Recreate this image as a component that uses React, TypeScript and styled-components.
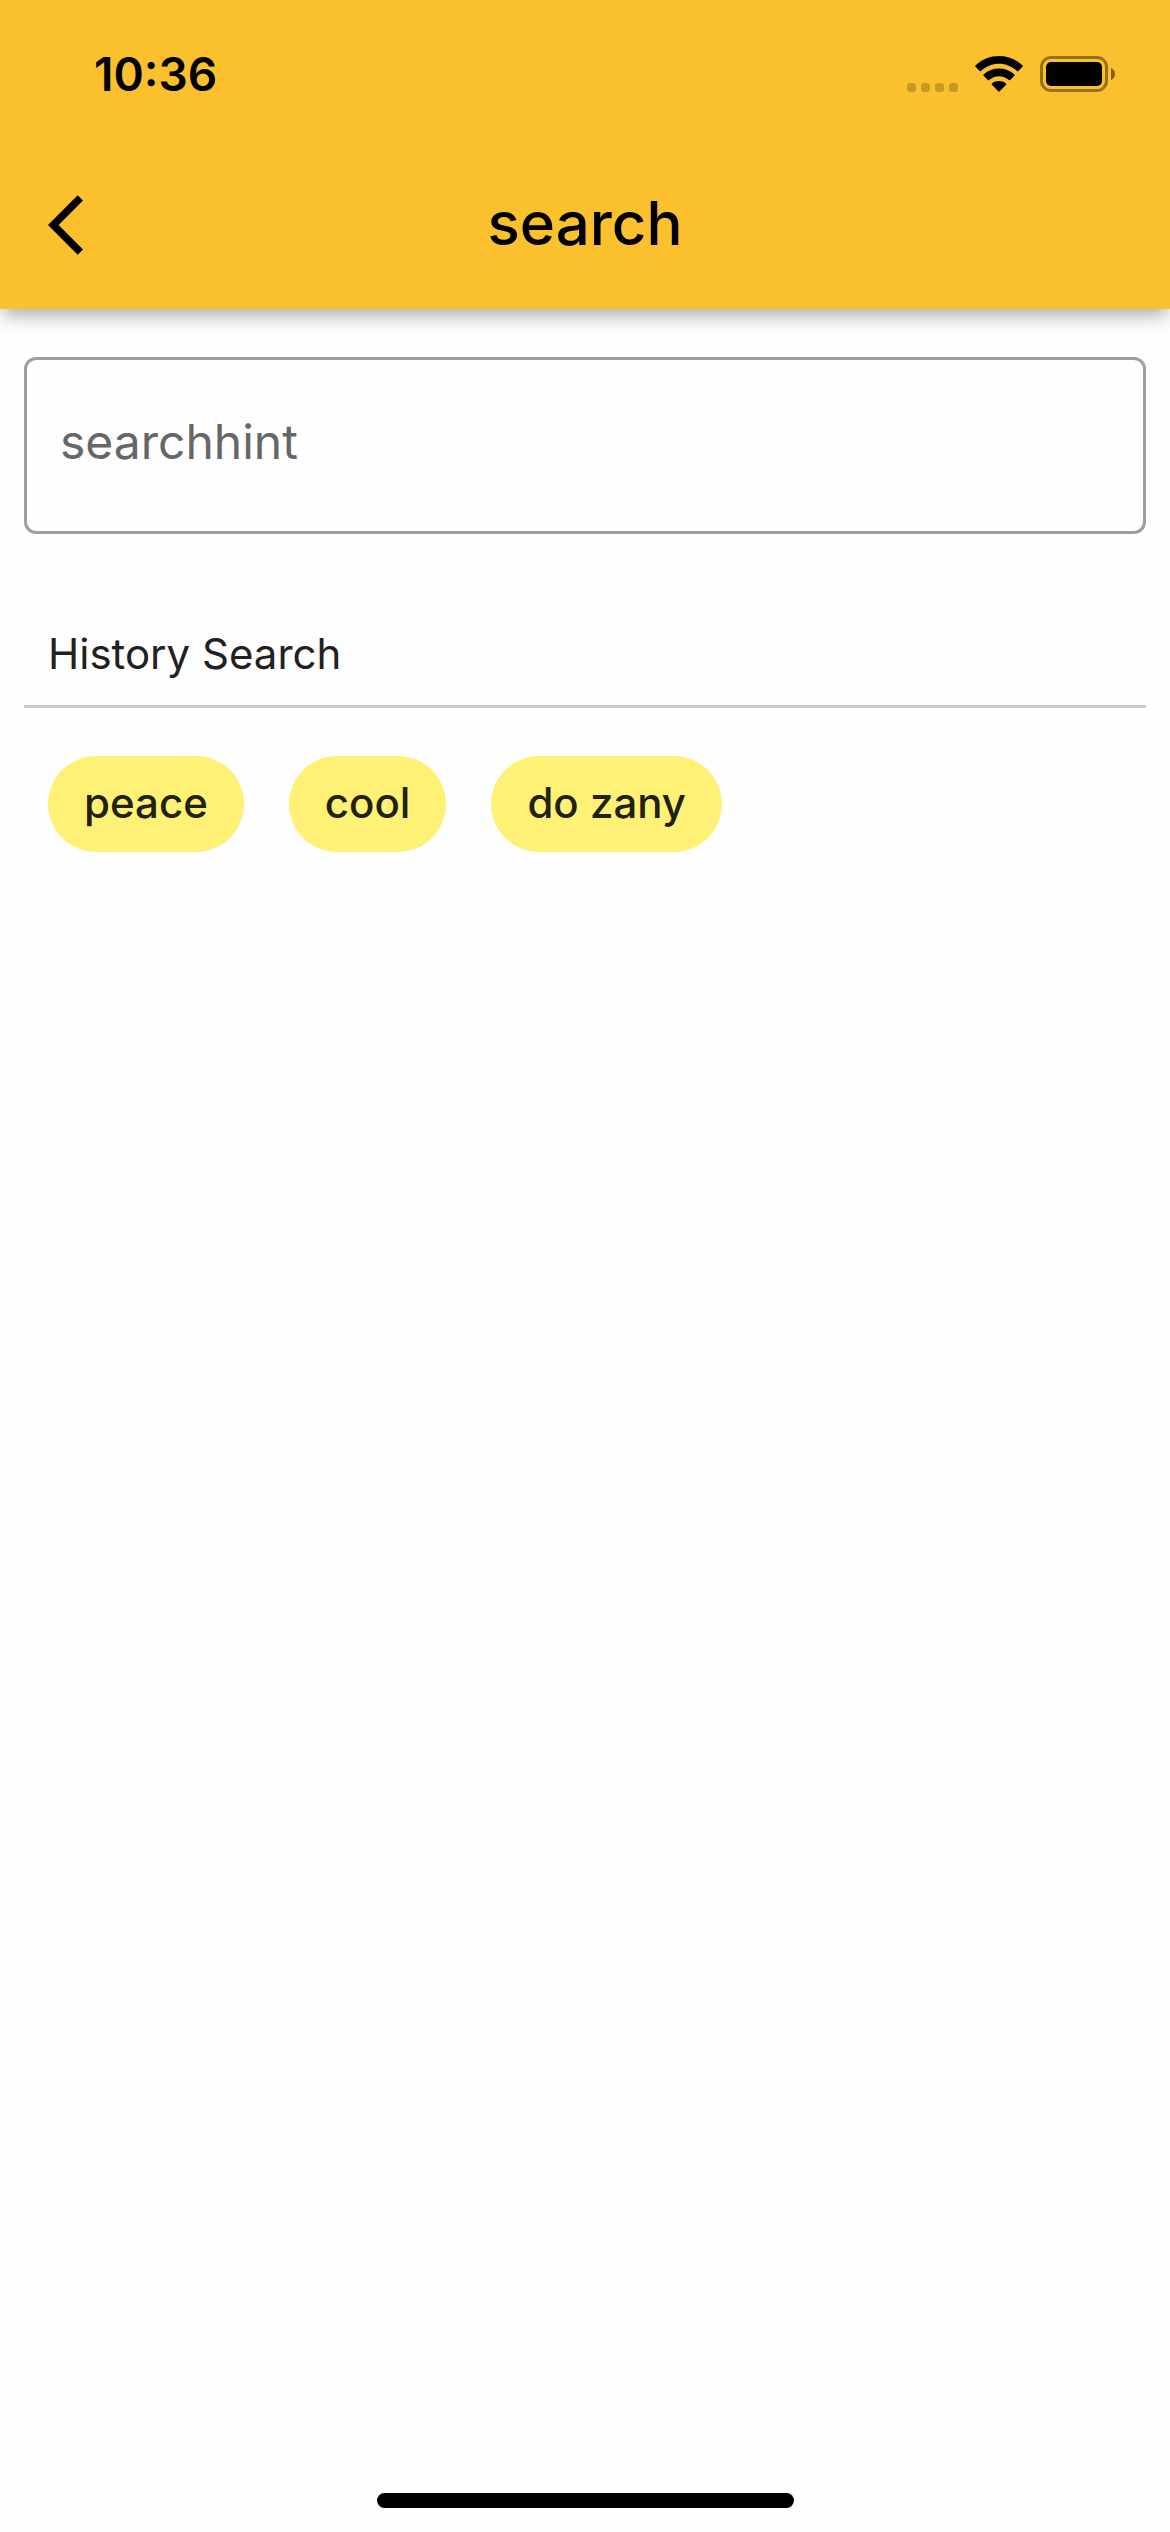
import React, { useState } from 'react';
import styled, { createGlobalStyle } from 'styled-components';

const GlobalStyle = createGlobalStyle`
  *, *::before, *::after { box-sizing: border-box; }
  body {
    margin: 0;
    background: #fefefe;
    color: #212121;
    font-family: Inter, Roboto, "Liberation Sans", sans-serif;
    font-size: 42px;
  }
  h1, h2, ul { margin: 0; padding: 0; font-weight: 400; }
  button, input { font: inherit; color: inherit; }
`;

const Screen = styled.div`
  display: flex;
  flex-direction: column;
  min-height: 100vh;
`;

const Header = styled.header`
  background: #fbc02d;
  color: #000;
  box-shadow: 0 9px 18px -3px rgba(0, 0, 0, 0.34);
`;

const StatusBar = styled.div`
  display: flex;
  align-items: flex-start;
  justify-content: space-between;
  height: 141px;
  padding: 46px 54px 0 94px;
`;

const Clock = styled.time`
  font-size: 46px;
  line-height: 56px;
  font-weight: 600;
`;

const StatusIcons = styled.div`
  display: flex;
  align-items: flex-end;
  gap: 17px;
  padding-top: 10px;

  svg { display: block; }
`;

const Toolbar = styled.div`
  display: grid;
  grid-template-columns: 72px 1fr 72px;
  align-items: center;
  height: 168px;
  padding: 0 48px;
`;

const BackButton = styled.button`
  display: block;
  width: 72px;
  height: 72px;
  padding: 0;
  border: 0;
  background: none;
  cursor: pointer;

  svg { display: block; }
`;

const Title = styled.h1`
  padding-bottom: 4px;
  font-size: 60px;
  line-height: 72px;
  font-weight: 500;
  text-align: center;
`;

const Main = styled.main`
  flex: 1;
  padding: 48px 24px;
`;

const SearchInput = styled.input`
  display: block;
  width: 100%;
  height: 177px;
  padding: 0 33px 8px;
  border: 3px solid #9e9e9e;
  border-radius: 12px;
  background: transparent;
  font-size: 48px;
  outline: none;

  &::placeholder { color: #666; opacity: 1; }
  &:focus { border-color: #fbc02d; }
`;

const SectionTitle = styled.h2`
  margin-top: 90px;
  padding: 0 24px 21px;
  border-bottom: 3px solid #ccc;
  font-size: 42px;
  line-height: 60px;
`;

const ChipList = styled.ul`
  display: flex;
  flex-wrap: wrap;
  gap: 45px;
  padding: 48px 24px;
  list-style: none;
`;

const Chip = styled.button`
  display: block;
  height: 96px;
  padding: 0 36px 4px;
  border: 0;
  border-radius: 48px;
  background: #fff176;
  color: #212110;
  font-size: 42px;
  font-weight: 500;
  cursor: pointer;
`;

const HomeIndicator = styled.div`
  width: 417px;
  height: 15px;
  margin: 0 auto 24px;
  border-radius: 8px;
  background: #000;
`;

const CellularIcon = () => (
  <svg width="51" height="9" viewBox="0 0 51 9" fill="#000" fillOpacity="0.2" aria-hidden="true">
    {[0, 14, 28, 42].map((x) => (
      <rect key={x} x={x} width="9" height="9" rx="3" />
    ))}
  </svg>
);

const WifiIcon = () => (
  <svg width="48" height="36" viewBox="0 0 48 36" aria-hidden="true">
    <path d="M24 7.8C30.7 7.8 37.1 10.4 42 15Q42.6 15.7 43.3 15L47.5 10.8Q48.2 10.1 47.5 9.5C34.4-3.1 13.6-3.1.5 9.5Q-.2 10.1.5 10.8L4.7 15Q5.4 15.7 6 15C10.9 10.4 17.3 7.8 24 7.8Z" />
    <path d="M24 20.2C27.7 20.2 31.2 21.6 33.9 24Q34.6 24.6 35.2 24L39.4 19.8Q40.1 19.1 39.4 18.4C30.7 10.5 17.3 10.5 8.6 18.4Q7.9 19.1 8.6 19.8L12.8 24Q13.4 24.6 14.1 24C16.8 21.6 20.3 20.2 24 20.2Z" />
    <path d="M31.1 28.8Q31.7 28.1 31 27.5C27 24.3 21 24.3 17 27.5Q16.3 28.1 16.9 28.8L23.3 35.3Q24 36 24.7 35.3Z" />
  </svg>
);

const BatteryIcon = () => (
  <svg width="76" height="36" viewBox="0 0 76 36" aria-hidden="true">
    <rect x="1.5" y="1.5" width="65" height="33" rx="9.5" fill="none" stroke="#000" strokeOpacity="0.4" strokeWidth="3" />
    <rect x="6" y="6" width="56" height="24" rx="5" />
    <path d="M71 12C73.4 13 75 15.3 75 18S73.4 23 71 24Z" fillOpacity="0.5" />
  </svg>
);

const history = ['peace', 'cool', 'do zany'];

export default function App() {
  const [query, setQuery] = useState('');

  return (
    <Screen>
      <GlobalStyle />
      <Header>
        <StatusBar>
          <Clock>10:36</Clock>
          <StatusIcons>
            <CellularIcon />
            <WifiIcon />
            <BatteryIcon />
          </StatusIcons>
        </StatusBar>
        <Toolbar>
          <BackButton type="button" aria-label="Back">
            <svg width="72" height="72" viewBox="0 0 24 24" aria-hidden="true">
              <path d="M11.67 3.87 9.9 2.1 0 12l9.9 9.9 1.77-1.77L3.54 12z" />
            </svg>
          </BackButton>
          <Title id="search-title">search</Title>
        </Toolbar>
      </Header>
      <Main>
        <SearchInput
          type="text"
          aria-labelledby="search-title"
          placeholder="searchhint"
          value={query}
          onChange={(event) => setQuery(event.target.value)}
        />
        <SectionTitle>History Search</SectionTitle>
        <ChipList>
          {history.map((term) => (
            <li key={term}>
              <Chip type="button" onClick={() => setQuery(term)}>
                {term}
              </Chip>
            </li>
          ))}
        </ChipList>
      </Main>
      <HomeIndicator />
    </Screen>
  );
}
